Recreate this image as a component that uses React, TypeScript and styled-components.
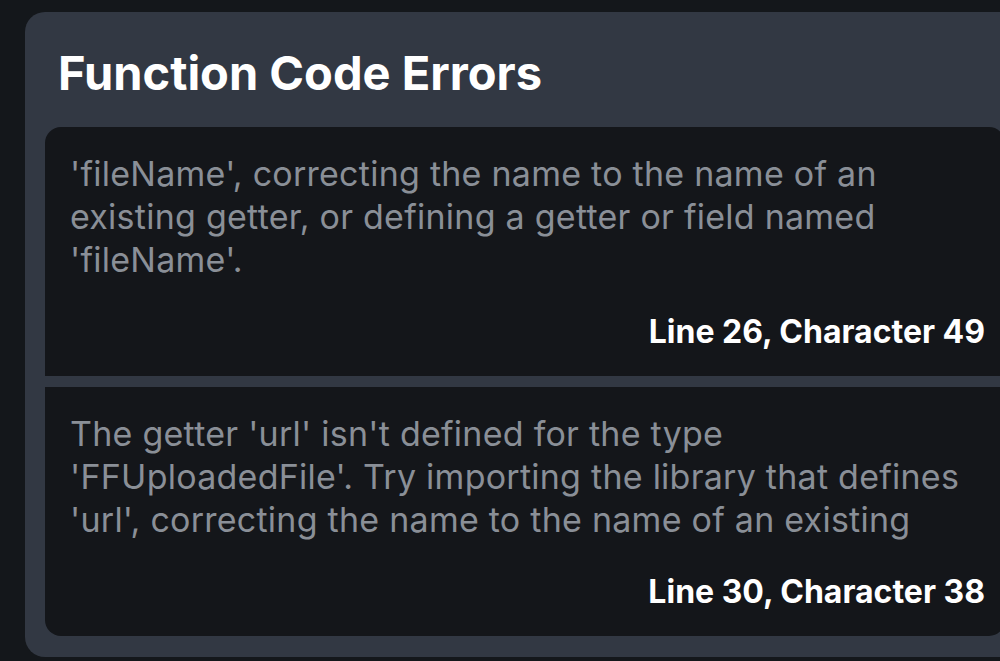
import styled, { createGlobalStyle } from 'styled-components'

const GlobalStyle = createGlobalStyle`
  html, body {
    margin: 0;
    padding: 0;
    background: #14171b;
    overflow: hidden;
    font-family: Inter, 'Noto Sans', sans-serif;
  }
`

const Panel = styled.section`
  box-sizing: border-box;
  width: 1000px;
  margin: 12px 0 0 25px;
  padding: 33px 20px 21px 20px;
  background: #323843;
  border-radius: 20px;
`

const Title = styled.h2`
  margin: 0 0 26px 13px;
  font-size: 47px;
  line-height: 56px;
  font-weight: 700;
  color: #ffffff;
`

const ErrorList = styled.ul`
  list-style: none;
  margin: 0;
  padding: 0;
  display: flex;
  flex-direction: column;
  gap: 11px;
  border-radius: 16px;
  overflow: hidden;
`

const ErrorItem = styled.li`
  background: #14161a;
  padding: 25px 20px 24px 25px;
`

const Message = styled.p`
  margin: 0;
  max-height: 129px;
  overflow: hidden;
  font-size: 34px;
  line-height: 43px;
  color: #8a8f97;
  letter-spacing: 0.25px;
`

const Location = styled.div`
  margin-top: 31px;
  text-align: right;
  font-size: 32px;
  line-height: 40px;
  font-weight: 700;
  color: #ffffff;
`

type CodeError = {
  message: string
  line: number
  character: number
}

const errors: CodeError[] = [
  {
    message:
      "'fileName', correcting the name to the name of an existing getter, or defining a getter or field named 'fileName'.",
    line: 26,
    character: 49,
  },
  {
    message:
      "The getter 'url' isn't defined for the type 'FFUploadedFile'. Try importing the library that defines 'url', correcting the name to the name of an existing getter, or defining a getter or field named 'url'.",
    line: 30,
    character: 38,
  },
]

const App = () => {
  return (
    <>
      <GlobalStyle />
      <Panel>
        <Title>Function Code Errors</Title>
        <ErrorList>
          {errors.map((error) => (
            <ErrorItem key={`${error.line}-${error.character}`}>
              <Message>{error.message}</Message>
              <Location>
                Line {error.line}, Character {error.character}
              </Location>
            </ErrorItem>
          ))}
        </ErrorList>
      </Panel>
    </>
  )
}

export default App
